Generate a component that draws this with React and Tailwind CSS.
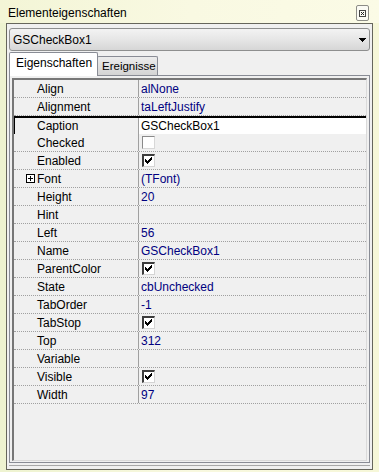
import React from "react";

const rows = [
  { n: "Align", v: "alNone" },
  { n: "Alignment", v: "taLeftJustify" },
  { n: "Caption", v: "GSCheckBox1", sel: true },
  { n: "Checked", cb: "off" },
  { n: "Enabled", cb: "on" },
  { n: "Font", v: "(TFont)", plus: true },
  { n: "Height", v: "20" },
  { n: "Hint", v: "" },
  { n: "Left", v: "56" },
  { n: "Name", v: "GSCheckBox1" },
  { n: "ParentColor", cb: "on" },
  { n: "State", v: "cbUnchecked" },
  { n: "TabOrder", v: "-1" },
  { n: "TabStop", cb: "on" },
  { n: "Top", v: "312" },
  { n: "Variable", v: "" },
  { n: "Visible", cb: "on" },
  { n: "Width", v: "97" },
];

// classic 7x7 windows check mark, drawn column by column
const CheckMark = () => (
  <svg width="7" height="7" viewBox="0 0 7 7" shapeRendering="crispEdges">
    <path d="M0 2h1v3H0zM1 3h1v3H1zM2 4h1v3H2zM3 3h1v3H3zM4 2h1v3H4zM5 1h1v3H5zM6 0h1v3H6z" fill="#000" />
  </svg>
);

const CheckBox = ({ on }) =>
  on ? (
    <div className="ml-[1px] w-[13px] h-[13px] bg-white border-t-2 border-l-2 border-r border-b border-t-[#3c3c3c] border-l-[#3c3c3c] border-r-[#d4d4d4] border-b-[#d4d4d4] flex items-start pl-[1px] pt-[1px]">
      <CheckMark />
    </div>
  ) : (
    <div className="ml-[1px] w-[13px] h-[13px] bg-white border border-t-[#8a8a8a] border-l-[#8a8a8a] border-r-[#d8d8d8] border-b-[#d8d8d8]" />
  );

const PlusBox = () => (
  <svg width="9" height="9" viewBox="0 0 9 9" shapeRendering="crispEdges" className="mr-[2px]">
    <rect x="0.5" y="0.5" width="8" height="8" fill="#fff" stroke="#000" />
    <path d="M2 4h5v1H2zM4 2h1v5H4z" fill="#000" />
  </svg>
);

const Row = ({ r }) => (
  <div
    className={
      r.sel
        ? "flex h-[18px] border-t-2 border-black"
        : "flex h-[18px] border-b border-dotted border-[#a0a0a0]"
    }
  >
    <div
      className={
        r.sel
          ? "w-[125px] shrink-0 flex items-center border-l border-l-black border-r border-r-[#a0a0a0] pl-[22px] text-black"
          : r.plus
          ? "w-[125px] shrink-0 flex items-center border-r border-[#a0a0a0] pl-[12px] text-black"
          : "w-[125px] shrink-0 flex items-center border-r border-[#a0a0a0] pl-[23px] text-black"
      }
    >
      {r.plus && <PlusBox />}
      {r.n}
    </div>
    <div
      className={
        r.sel
          ? "flex-1 flex items-center pl-[2px] bg-white text-black"
          : "flex-1 flex items-center pl-[2px] text-[#000080]"
      }
    >
      {r.cb ? <CheckBox on={r.cb === "on"} /> : r.v}
    </div>
  </div>
);

const App = () => {
  return (
    <div className="w-[379px] h-[472px] overflow-hidden flex flex-col bg-gradient-to-r from-[#eef3d0] via-[#f8f8df] to-[#f6f7d8] font-['Liberation_Sans',Arial,sans-serif] text-[12px] leading-[14px]">
      {/* Title bar */}
      <div className="h-[23px] shrink-0 flex items-start justify-between pl-[8px] pr-[10px] bg-gradient-to-r from-[#f3f5d6] via-[#f9f9e2] to-[#fbfbe6]">
        <span className="mt-[6px] text-black">Elementeigenschaften</span>
        <div className="mt-[5px] w-[13px] h-[16px] rounded-[2px] border border-[#8c8c86] bg-[#fbfbf4] flex items-center justify-center">
          <svg width="7" height="7" viewBox="0 0 7 7" shapeRendering="crispEdges">
            <rect x="0.5" y="0.5" width="6" height="6" fill="none" stroke="#444" />
            <path d="M2 2h1v1H2zM4 2h1v1H4zM3 3h1v1H3zM2 4h1v1H2zM4 4h1v1H4z" fill="#222" />
          </svg>
        </div>
      </div>

      {/* Frame */}
      <div className="ml-[6px] w-[367px] h-[447px] shrink-0 border border-[#66665c] bg-[#f0f0f0] flex flex-col pt-[4px] px-[2px]">
        {/* Combo box */}
        <div className="h-[23px] shrink-0 rounded-[3px] border border-[#8e8f8f] bg-gradient-to-b from-[#f3f3f3] via-[#e6e6e6] to-[#d6d6d6] flex items-center justify-between pl-[3px] pr-[3px]">
          <span className="text-black">GSCheckBox1</span>
          <svg width="7" height="4" viewBox="0 0 7 4" shapeRendering="crispEdges">
            <path d="M0 0h7v1H0zM1 1h5v1H1zM2 2h3v1H2zM3 3h1v1H3z" fill="#000" />
          </svg>
        </div>

        {/* Tabs */}
        <div className="h-[23px] mt-[1px] shrink-0 flex items-end">
          <div className="relative z-10 w-[89px] h-[24px] -mb-[1px] bg-white border border-b-0 border-[#898c95] rounded-t-[2px] pl-[6px] pt-[3px] text-black">
            Eigenschaften
          </div>
          <div className="-ml-[1px] w-[61px] h-[19px] bg-gradient-to-b from-[#ececec] to-[#d4d4d4] border border-b-0 border-[#898c95] rounded-t-[2px] pl-[4px] pt-[2px] text-[11.5px] whitespace-nowrap text-black">
            Ereignisse
          </div>
        </div>

        {/* Tab sheet */}
        <div className="h-[388px] shrink-0 border border-[#898c95] bg-[#f0f0f0] pl-[2px] pr-[2px] pt-[2px] pb-[1px] flex flex-col">
          <div className="flex-1 flex flex-col border-t-2 border-l-2 border-r border-b border-t-[#777777] border-l-[#777777] border-r-[#dadada] border-b-[#dadada] bg-[#f0f0f0]">
            {rows.map((r) => (
              <Row key={r.n} r={r} />
            ))}
          </div>
        </div>
        <div className="mt-[2px] h-[1px] shrink-0 bg-[#a8a8a8]" />
      </div>
    </div>
  );
};

export default App;
